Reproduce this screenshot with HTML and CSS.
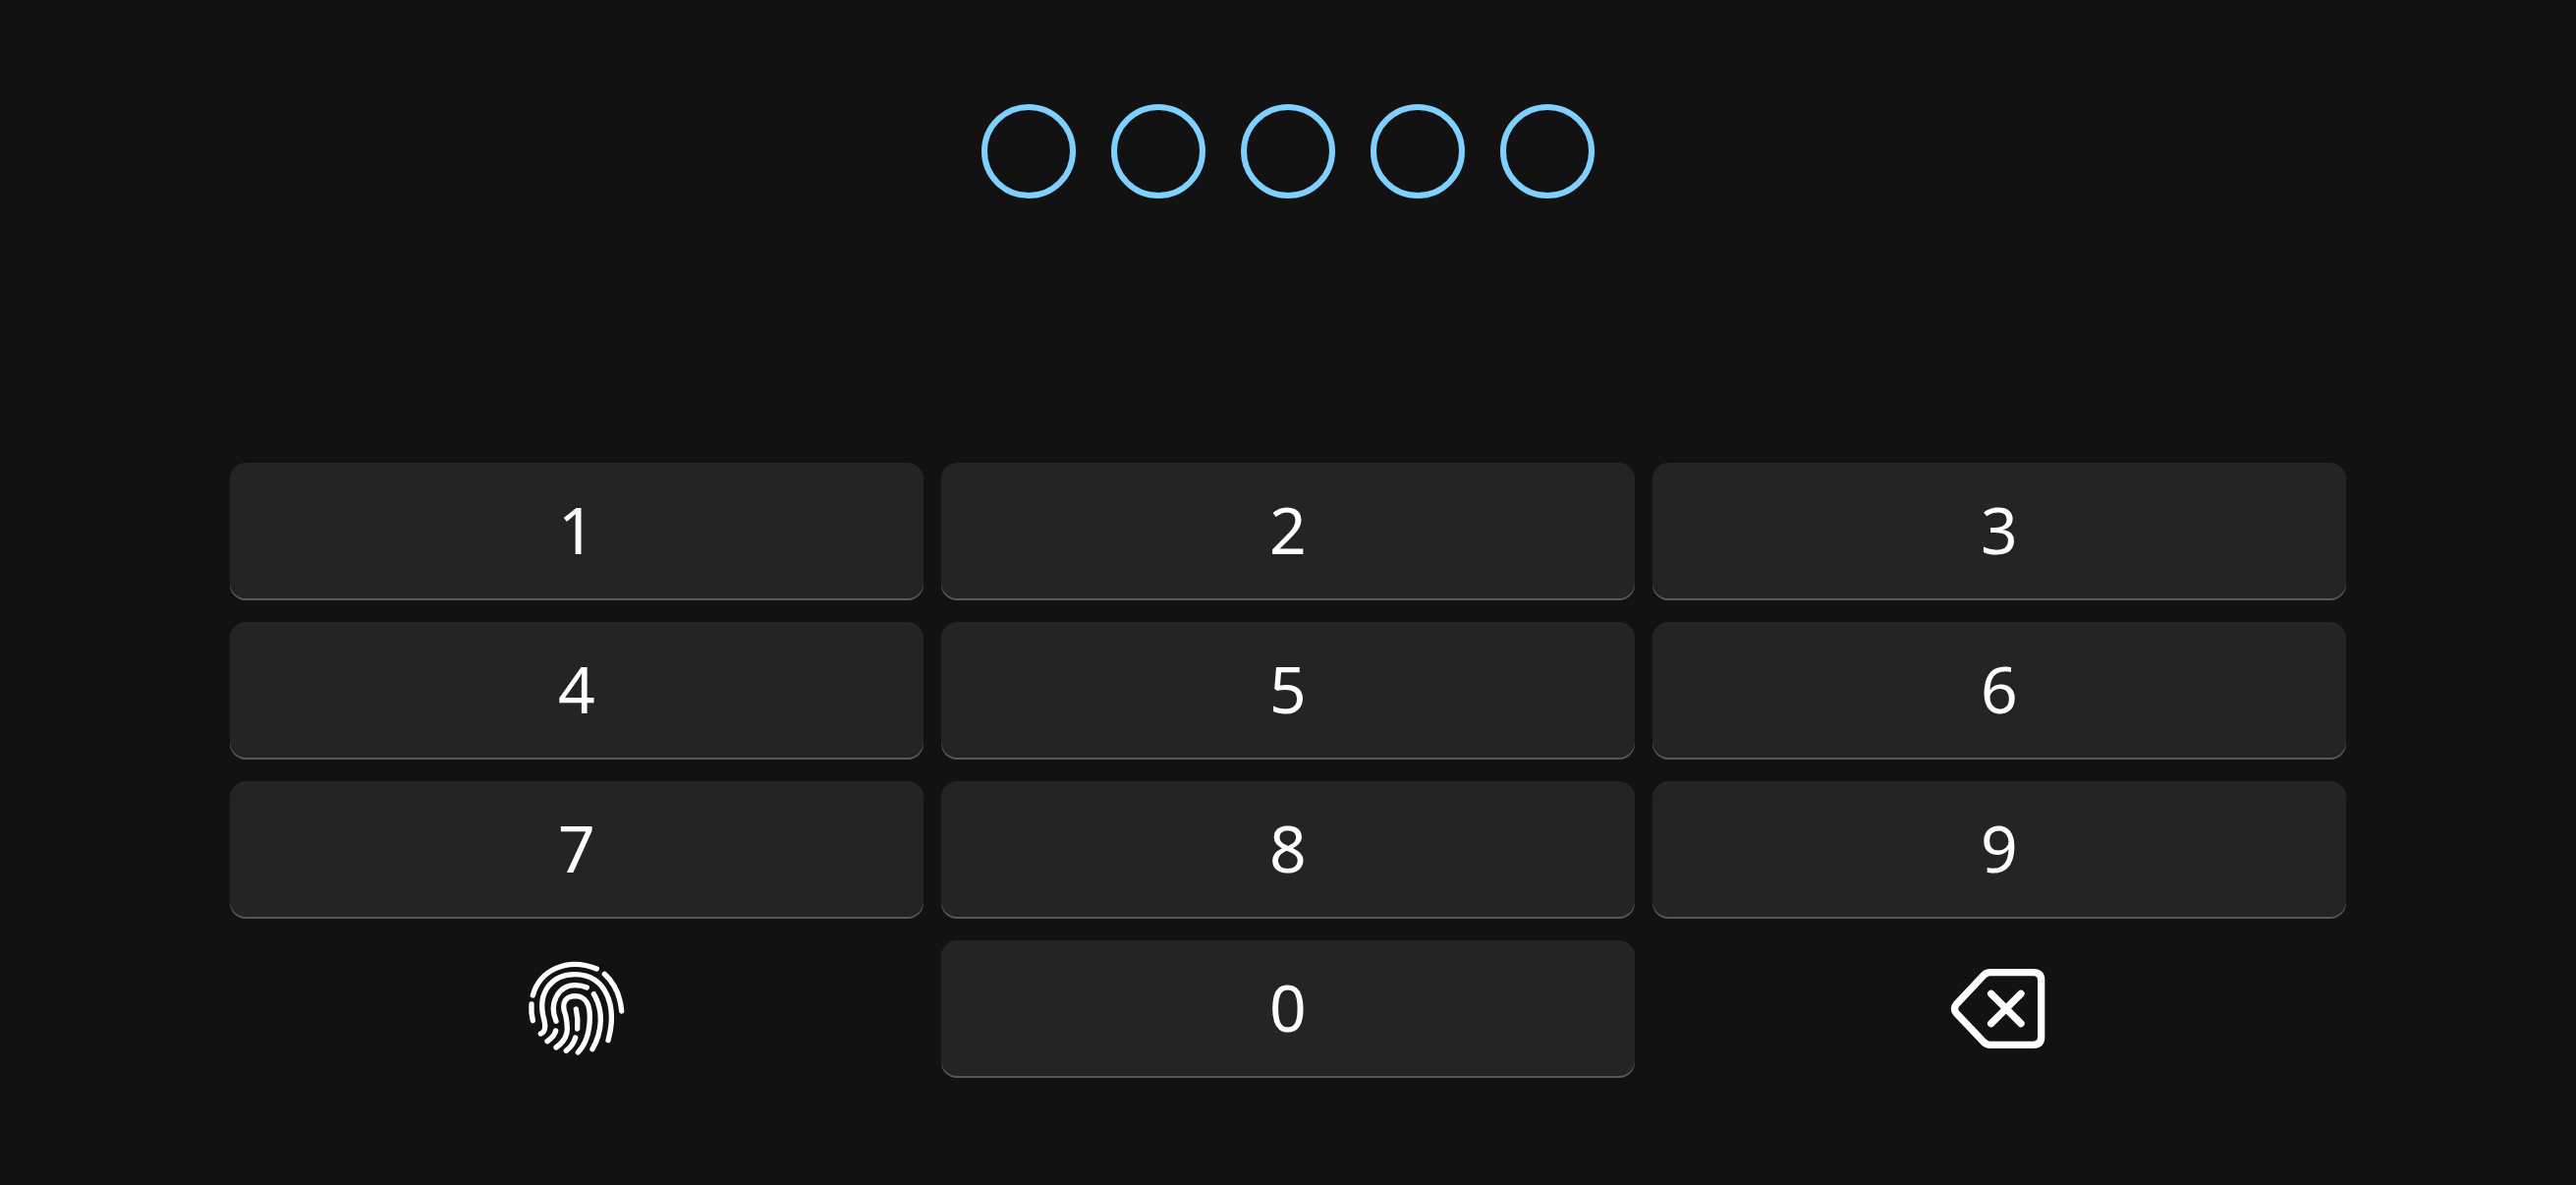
FILE: index.html
```html
<!DOCTYPE html>
<html lang="en">
<head>
<meta charset="utf-8">
<meta name="viewport" content="width=device-width, initial-scale=1">
<title>Passcode</title>
<link rel="stylesheet" href="styles.css">
</head>
<body>
<main class="lock">
  <div class="dots" role="img" aria-label="0 of 5 digits entered">
    <span class="dot"></span><span class="dot"></span><span class="dot"></span><span class="dot"></span><span class="dot"></span>
  </div>
  <div class="keypad">
    <button class="key" type="button">1</button>
    <button class="key" type="button">2</button>
    <button class="key" type="button">3</button>
    <button class="key" type="button">4</button>
    <button class="key" type="button">5</button>
    <button class="key" type="button">6</button>
    <button class="key" type="button">7</button>
    <button class="key" type="button">8</button>
    <button class="key" type="button">9</button>
    <button class="key key-plain" type="button" aria-label="Unlock with fingerprint">
      <svg class="icon" viewBox="6 6 390 390" stroke-width="16" aria-hidden="true">
        <path d="M67 159C88 83 170 41 262 78"/>
        <path d="M286 94Q332 136 338 207"/>
        <path d="M63 186Q61 212 67 236"/>
        <path d="M91 276C113 267 102 236 98 219C84 148 126 95 195 95C294 96 325 196 297 296"/>
        <path d="M138 238C114 180 148 128 196 128Q216 128 232 135"/>
        <path d="M253 155C284 206 279 272 249 323"/>
        <path d="M111 299Q132 286 137 267"/>
        <path d="M138 318C175 292 177 265 167 219C151 179 170 161 198 161C228 162 241 188 241 224C241 268 230 306 205 333"/>
        <path d="M199 201Q206 231 203 261"/>
        <path d="M169 328Q190 312 197 288"/>
      </svg>
    </button>
    <button class="key" type="button">0</button>
    <button class="key key-plain" type="button" aria-label="Delete">
      <svg class="icon" viewBox="0 -24 390 390" stroke-width="22" aria-hidden="true">
        <path d="M167 59H299Q323 59 323 83V256Q323 280 299 280H167Q156 280 148 272L64 184Q53 170 64 156L148 67Q156 59 167 59Z"/>
        <path d="M170 124L261 215M261 124L170 215"/>
      </svg>
    </button>
  </div>
</main>
</body>
</html>
```
FILE: styles.css
```css
* {
  box-sizing: border-box;
}

body {
  margin: 0;
  background: #121212;
  color: #fff;
  font-family: "Noto Sans", "Open Sans", sans-serif;
}

.lock {
  display: flex;
  flex-direction: column;
  gap: 269px;
  min-height: 100vh;
  padding: 106px 234px;
}

.dots {
  display: flex;
  justify-content: center;
  gap: 36px;
}

.dot {
  width: 96px;
  height: 96px;
  border: 6px solid #7dd0ff;
  border-radius: 50%;
}

.keypad {
  display: grid;
  grid-template-columns: repeat(3, 1fr);
  gap: 22px 18px;
}

.key {
  display: flex;
  align-items: center;
  justify-content: center;
  height: 140px;
  padding: 0 0 6px;
  border: 0;
  border-radius: 16px;
  background: #242424;
  box-shadow: inset 0 -2px #575757;
  color: inherit;
  font-family: inherit;
  font-size: 66px;
  line-height: 1;
}

.key-plain {
  padding: 0;
  background: none;
  box-shadow: none;
}

.icon {
  width: 130px;
  height: 130px;
  fill: none;
  stroke: currentColor;
  stroke-linecap: round;
  stroke-linejoin: round;
}
```
